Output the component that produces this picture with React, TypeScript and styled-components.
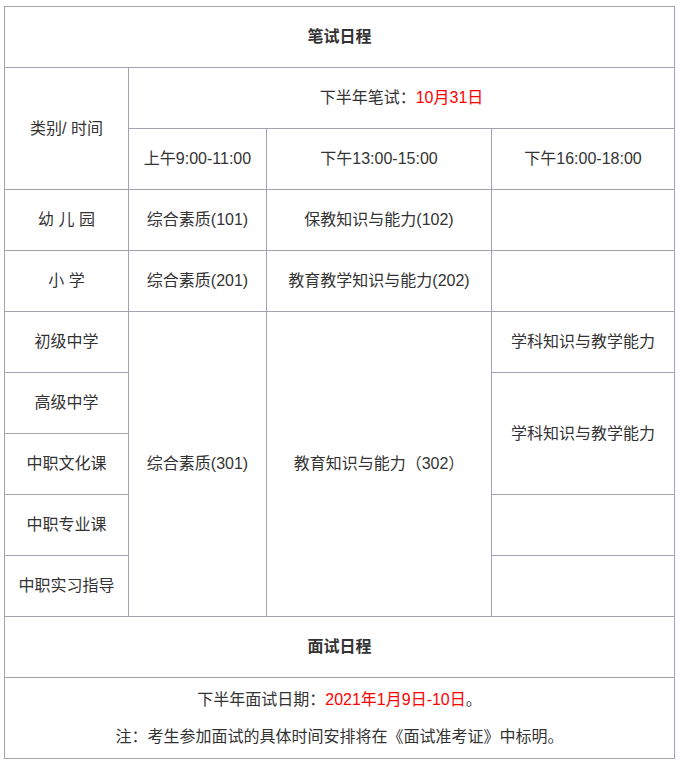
import React from "react";
import styled, { createGlobalStyle } from "styled-components";

const GlobalStyle = createGlobalStyle`
  body {
    margin: 0;
    background: #fff;
    font-family: "Liberation Sans", "Noto Sans CJK SC", sans-serif;
    color: #333;
  }
`;

const Page = styled.div`
  padding: 6px 0 0 4px;
`;

const Table = styled.table`
  border-collapse: collapse;
  table-layout: fixed;
  width: 670px;
  font-size: 16px;
`;

const Cell = styled.td<{ $tall?: boolean }>`
  border: 1px solid #a2a2b0;
  height: 60px;
  padding: 0;
  text-align: center;
  vertical-align: middle;
  line-height: 24px;
`;

const TitleCell = styled(Cell).attrs({ as: "th" })`
  font-weight: bold;
`;

const NoteCell = styled(Cell)`
  height: auto;
  padding: 10px 0 9px;
`;

const Line = styled.p`
  margin: 0;
  & + & {
    margin-top: 13px;
  }
`;

const Red = styled.span`
  color: #ff0000;
`;

const App: React.FC = () => {
  return (
    <Page>
      <GlobalStyle />
      <Table>
        <colgroup>
          <col style={{ width: 124 }} />
          <col style={{ width: 138 }} />
          <col style={{ width: 225 }} />
          <col style={{ width: 183 }} />
        </colgroup>
        <tbody>
          <tr>
            <TitleCell colSpan={4}>笔试日程</TitleCell>
          </tr>
          <tr>
            <Cell rowSpan={2}>类别/ 时间</Cell>
            <Cell colSpan={3}>
              下半年笔试：<Red>10月31日</Red>
            </Cell>
          </tr>
          <tr>
            <Cell>上午9:00-11:00</Cell>
            <Cell>下午13:00-15:00</Cell>
            <Cell>下午16:00-18:00</Cell>
          </tr>
          <tr>
            <Cell>幼 儿 园</Cell>
            <Cell>综合素质(101)</Cell>
            <Cell>保教知识与能力(102)</Cell>
            <Cell />
          </tr>
          <tr>
            <Cell>小 学</Cell>
            <Cell>综合素质(201)</Cell>
            <Cell>教育教学知识与能力(202)</Cell>
            <Cell />
          </tr>
          <tr>
            <Cell>初级中学</Cell>
            <Cell rowSpan={5}>综合素质(301)</Cell>
            <Cell rowSpan={5}>教育知识与能力（302）</Cell>
            <Cell>学科知识与教学能力</Cell>
          </tr>
          <tr>
            <Cell>高级中学</Cell>
            <Cell rowSpan={2}>学科知识与教学能力</Cell>
          </tr>
          <tr>
            <Cell>中职文化课</Cell>
          </tr>
          <tr>
            <Cell>中职专业课</Cell>
            <Cell />
          </tr>
          <tr>
            <Cell>中职实习指导</Cell>
            <Cell />
          </tr>
          <tr>
            <TitleCell colSpan={4}>面试日程</TitleCell>
          </tr>
          <tr>
            <NoteCell colSpan={4}>
              <Line>
                下半年面试日期：<Red>2021年1月9日-10日</Red>。
              </Line>
              <Line>注：考生参加面试的具体时间安排将在《面试准考证》中标明。</Line>
            </NoteCell>
          </tr>
        </tbody>
      </Table>
    </Page>
  );
};

export default App;
